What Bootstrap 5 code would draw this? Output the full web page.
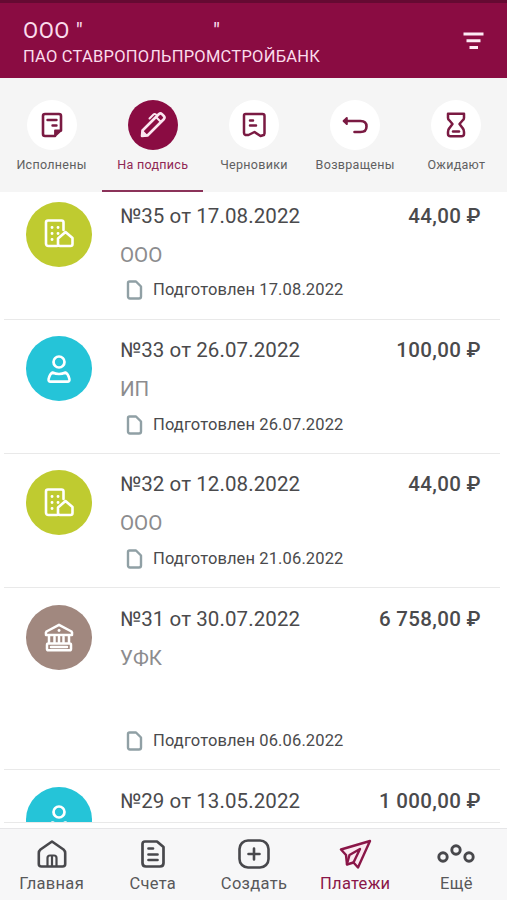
<!DOCTYPE html>
<html lang="ru">
<head>
<meta charset="utf-8">
<meta name="viewport" content="width=device-width, initial-scale=1">
<title>Платежи</title>
<link href="https://cdn.jsdelivr.net/npm/bootstrap@5.3.0/dist/css/bootstrap.min.css" rel="stylesheet">
<style>
:root{--brand:#8a0c42;--ink:#4a4a4c}
body{font-family:Roboto,"Liberation Sans",sans-serif;color:var(--ink);background:#fff}
svg{fill:none;stroke:currentColor;stroke-linecap:round;stroke-linejoin:round;display:block}
.screen{height:900px}
.topbar{height:78px;background:var(--brand);border-top:3px solid #650a32;color:#fbdcec;padding:15px 23px 0}
.org{font-size:22px;line-height:26px;letter-spacing:.5px}
.org-gap{width:129.5px}
.bank{font-size:16.5px;line-height:24px;letter-spacing:.24px;padding-top:1px}
.filter-btn{color:#fdeaf4;margin-top:14px}
.filter-btn svg{stroke-linecap:butt}
.tabs{height:114px;background:#f5f5f5;padding:21.5px 0 0 1px}
.tab-item{color:#5f5f61;font-size:12.5px;line-height:18px;letter-spacing:.3px;height:92.5px;border-bottom:2px solid transparent}
.tab-item.current{color:#8f2753;border-color:#8b3259}
.disc{width:50px;height:50px;background:#fff;color:#7a1a42;margin-bottom:6px}
.current .disc{background:var(--brand);color:#fbe6f0}
.payments{height:636px}
.payment{height:134.4px;padding:16.5px 19px 0 21.5px;margin:0 7px 0 4px;border-bottom:1.5px solid #e9e9e9}
.payment:first-child{height:127.5px;padding-top:9.5px}
.payment.tall{height:182px}
.payment.clipped{height:53px}
.avatar{width:66.5px;height:65px;color:#fff;margin-right:28px}
.lime{background:#bfcb30}.cyan{background:#25c4d8}.taupe{background:#a1887f}
.ttl{font-size:20.5px;line-height:24px;margin-top:2px;letter-spacing:.09px}
.amount{font-weight:500;letter-spacing:.33px}
.payee{font-size:20.5px;line-height:24px;margin-top:15px;color:#8c8c8e}
.state{font-size:16.5px;line-height:22px;margin-top:12.5px;padding-left:5.5px;letter-spacing:.12px}
.state svg{color:#90a0a5;margin-right:10.5px}
.tall .state{margin-top:60px}
.bottombar{height:72px;background:#f7f7f8;border-top:1px solid #e6e6e8;padding:10px 0 0 1px}
.nav-cell{font-size:16.5px;line-height:22px;letter-spacing:.3px;color:#58585a}
.nav-cell svg{color:#48484c;margin-bottom:3.5px}
.nav-cell.current,.nav-cell.current svg{color:#8a1648}
</style>
<script src="https://cdn.jsdelivr.net/npm/bootstrap@5.3.0/dist/js/bootstrap.bundle.min.js"></script>
</head>
<body>
<svg width="0" height="0" class="d-none">
  <symbol id="i-building" viewBox="0 0 30 30"><path d="M13 27H4.500Q2 27 2 24.500V3.500Q2 1.500 4 1.500H17.500Q19.500 1.500 19.500 3.500V11M14 19.500L21.500 13L28.500 19V25Q28.500 27 26.500 27H16Q14 27 14 25Z" stroke-width="2.600"/><path d="M8 8.500h.1M14 8.500h.1M8 14.500h.1M14 14.500h.1M8 20.500h.1" stroke-width="2.800"/></symbol>
  <symbol id="i-person" viewBox="0 0 24 28"><circle cx="12" cy="7" r="5.500" stroke-width="2.700"/><path d="M5.500 17.500Q12 20.500 18.500 17.500Q21 18.500 22.400 24Q22.800 26.600 20.500 26.600H3.500Q1.200 26.600 1.600 24Q3 18.500 5.500 17.500Z" stroke-width="2.600"/></symbol>
  <symbol id="i-file" viewBox="0 0 16 20"><path d="M3 1.500H9.500L14.500 6.500V16.500Q14.500 18.500 12.500 18.500H3.500Q1.500 18.500 1.500 16.500V3Q1.500 1.500 3 1.500Z" stroke-width="2.400"/></symbol>
</svg>
<div class="screen d-flex flex-column overflow-hidden">
  <header class="topbar d-flex justify-content-between flex-shrink-0">
    <div class="text-nowrap">
      <div class="org d-flex"><span>ООО "</span><span class="org-gap"></span><span>"</span></div>
      <div class="bank">ПАО СТАВРОПОЛЬПРОМСТРОЙБАНК</div>
    </div>
    <div class="filter-btn"><svg width="21" height="18" viewBox="0 0 21 18" stroke-width="3"><path d="M.500 2H20.500M3.500 8.700H17.500M6.500 15.500H15"/></svg></div>
  </header>

  <nav class="tabs d-flex flex-shrink-0 text-center text-nowrap">
    <div class="tab-item col d-flex flex-column align-items-center"><div class="disc rounded-circle d-flex align-items-center justify-content-center"><svg width="22" height="26" viewBox="0 0 22 26" stroke-width="2.600"><path d="M14 24H4Q2 24 2 22V4Q2 2 4 2H18Q20 2 20 4V18.500"/><path d="M14 24V18.500H20Z" fill="currentColor" stroke-width="1.800"/><path d="M6.500 8H15.500M11.500 13.500H15.500" stroke-width="2.400"/></svg></div>Исполнены</div>
    <div class="tab-item current col d-flex flex-column align-items-center"><div class="disc rounded-circle d-flex align-items-center justify-content-center"><svg width="28" height="28" viewBox="0 0 28 28" stroke-width="2.600"><path d="M3 25L3.500 19.500L20 3Q21.500 1.800 23 3.200L24.800 5Q26.200 6.500 25 8L8.500 24.500Z"/><path d="M3.500 20L8 24.500L3 25Z" fill="currentColor" stroke-width="1.500"/><path d="M17 6L22 11M10.500 7.500L14.500 3.500Q15.500 2.500 17 3.500" stroke-width="2"/></svg></div>На подпись</div>
    <div class="tab-item col d-flex flex-column align-items-center"><div class="disc rounded-circle d-flex align-items-center justify-content-center"><svg width="24" height="26" viewBox="0 0 24 26" stroke-width="2.500"><path d="M2 3.500Q2 2 3.500 2H20.500Q22.500 2 22.500 4V21.500Q22.500 23 21 23.200L18.500 24L12.500 20L6.500 23L3.500 23Q2 22.500 2 21Z"/><path d="M8 8.500H11M8 13.500H14"/></svg></div>Черновики</div>
    <div class="tab-item col d-flex flex-column align-items-center"><div class="disc rounded-circle d-flex align-items-center justify-content-center"><svg width="26" height="20" viewBox="0 0 26 20" stroke-width="2.600"><path d="M2 6H18.500Q24.500 6 24.500 11.500Q24.500 17 18.500 17H12.500"/><path d="M4.800 3L1.800 6L4.800 9Z" fill="currentColor" stroke-width="2"/></svg></div>Возвращены</div>
    <div class="tab-item col d-flex flex-column align-items-center"><div class="disc rounded-circle d-flex align-items-center justify-content-center"><svg width="20" height="26" viewBox="0 0 20 26" stroke-width="2.500"><path d="M2 1.800H18V6Q18 7.500 16.500 8.500L13.500 12L16.500 16Q18 17.500 18 20V22Q18 24.200 15.500 24.200H4.500Q2 24.200 2 22V20Q2 17.500 3.500 16L6.500 12L3.500 8.500Q2 7.500 2 6Z"/><path d="M7 19.500H13"/></svg></div>Ожидают</div>
  </nav>

  <main class="payments overflow-hidden flex-shrink-0">
    <div class="payment d-flex">
      <div class="avatar lime rounded-circle flex-shrink-0 d-flex align-items-center justify-content-center"><svg width="30" height="30"><use href="#i-building"/></svg></div>
      <div class="flex-grow-1 text-nowrap">
        <div class="ttl d-flex justify-content-between"><span>№35 от 17.08.2022</span><span class="amount">44,00 ₽</span></div>
        <div class="payee">ООО</div>
        <div class="state d-flex align-items-center"><svg width="17" height="20"><use href="#i-file"/></svg>Подготовлен 17.08.2022</div>
      </div>
    </div>
    <div class="payment d-flex">
      <div class="avatar cyan rounded-circle flex-shrink-0 d-flex align-items-center justify-content-center"><svg width="24" height="28"><use href="#i-person"/></svg></div>
      <div class="flex-grow-1 text-nowrap">
        <div class="ttl d-flex justify-content-between"><span>№33 от 26.07.2022</span><span class="amount">100,00 ₽</span></div>
        <div class="payee">ИП</div>
        <div class="state d-flex align-items-center"><svg width="17" height="20"><use href="#i-file"/></svg>Подготовлен 26.07.2022</div>
      </div>
    </div>
    <div class="payment d-flex">
      <div class="avatar lime rounded-circle flex-shrink-0 d-flex align-items-center justify-content-center"><svg width="30" height="30"><use href="#i-building"/></svg></div>
      <div class="flex-grow-1 text-nowrap">
        <div class="ttl d-flex justify-content-between"><span>№32 от 12.08.2022</span><span class="amount">44,00 ₽</span></div>
        <div class="payee">ООО</div>
        <div class="state d-flex align-items-center"><svg width="17" height="20"><use href="#i-file"/></svg>Подготовлен 21.06.2022</div>
      </div>
    </div>
    <div class="payment tall d-flex">
      <div class="avatar taupe rounded-circle flex-shrink-0 d-flex align-items-center justify-content-center"><svg width="30" height="29" viewBox="0 0 30 29" stroke-width="2.500"><path d="M15 1.800L27.500 8.500Q28.500 9.500 28 12H2Q1.500 9.500 2.500 8.500ZM5 12V20M25 12V20M10.500 14V19M15 14V19M19.500 14V19M4 20.500H26Q27 20.500 27 22V26Q27 27.300 25.500 27.300H4.500Q3 27.300 3 26V22Q3 20.500 4 20.500ZM7 24H23"/><path d="M15 7.500h.1" stroke-width="2.800"/></svg></div>
      <div class="flex-grow-1 text-nowrap">
        <div class="ttl d-flex justify-content-between"><span>№31 от 30.07.2022</span><span class="amount">6 758,00 ₽</span></div>
        <div class="payee">УФК</div>
        <div class="state d-flex align-items-center"><svg width="17" height="20"><use href="#i-file"/></svg>Подготовлен 06.06.2022</div>
      </div>
    </div>
    <div class="payment clipped d-flex overflow-hidden">
      <div class="avatar cyan rounded-circle flex-shrink-0 d-flex align-items-center justify-content-center"><svg width="24" height="28"><use href="#i-person"/></svg></div>
      <div class="flex-grow-1 text-nowrap">
        <div class="ttl d-flex justify-content-between"><span>№29 от 13.05.2022</span><span class="amount">1 000,00 ₽</span></div>
      </div>
    </div>
  </main>

  <footer class="bottombar d-flex flex-shrink-0 text-center text-nowrap">
    <div class="nav-cell col d-flex flex-column align-items-center"><svg width="30" height="30" viewBox="0 0 30 30" stroke-width="2.600"><path d="M4.500 27.500Q1.800 27.500 1.800 25V14Q1.800 12 3.500 10.500L15 2.500L26.500 10.500Q28.200 12 28.200 14V25Q28.200 27.500 25.500 27.500Z"/><path d="M10.500 27V19Q10.500 16.500 13 16.500H17Q19.500 16.500 19.500 19V27M15 18V27" stroke-width="2.200"/></svg>Главная</div>
    <div class="nav-cell col d-flex flex-column align-items-center"><svg width="26" height="30" viewBox="0 0 26 30" stroke-width="2.700"><path d="M5 2.500H17L23.500 8V24Q23.500 27.500 20 27.500H6Q2.500 27.500 2.500 24V5Q2.500 2.500 5 2.500Z"/><path d="M8.500 9.500H13M8.500 15.500H17.500M8.500 21H17.500"/></svg>Счета</div>
    <div class="nav-cell col d-flex flex-column align-items-center"><svg width="32" height="30" viewBox="0 0 32 30" stroke-width="2.600"><rect x="1.500" y="1.500" width="29" height="27" rx="8.500"/><path d="M16 9.500V20.500M10.500 15H21.500"/></svg>Создать</div>
    <div class="nav-cell current col d-flex flex-column align-items-center"><svg width="33" height="30" viewBox="0 0 33 30" stroke-width="2.400"><path d="M31 2L19 28.500L14.500 23.500L8 25.500L7 16L2 10.500Z" fill="#fbe9f1"/><path d="M8 25L10.500 16L21 10L14.500 23.500"/></svg>Платежи</div>
    <div class="nav-cell col d-flex flex-column align-items-center"><svg width="38" height="30" viewBox="0 0 38 30" stroke-width="2.900"><circle cx="6" cy="18" r="4.200"/><circle cx="19" cy="11" r="4.200"/><circle cx="32" cy="18" r="4.200"/></svg>Ещё</div>
  </footer>
</div>
</body>
</html>
